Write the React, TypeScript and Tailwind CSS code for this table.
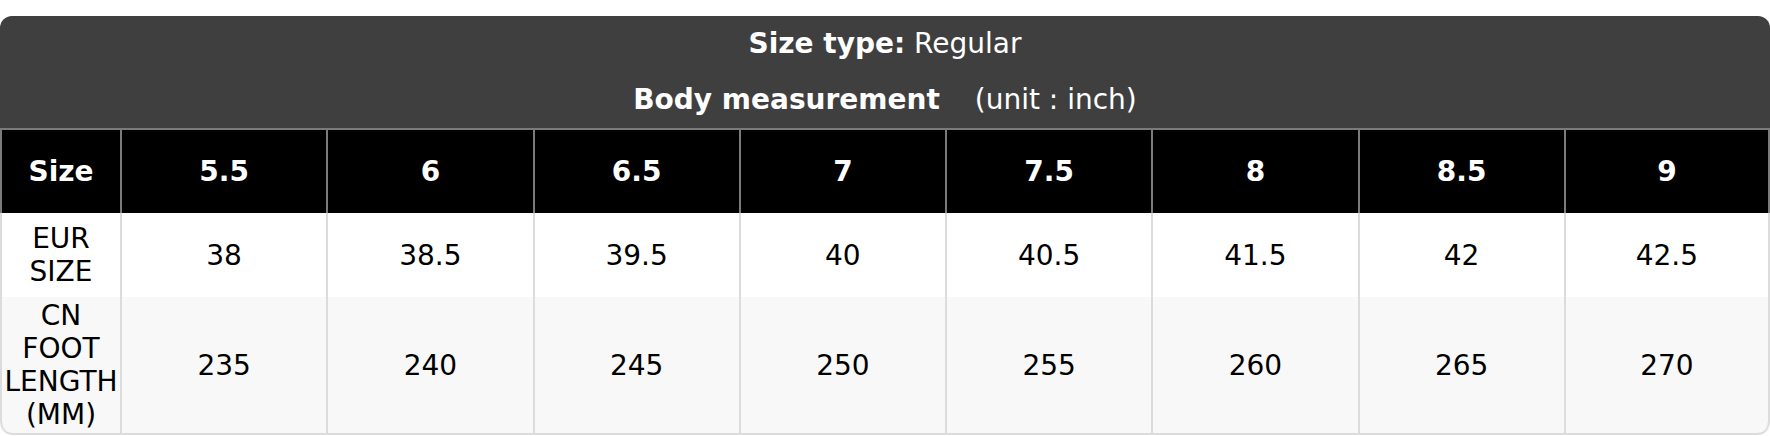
import React from "react";

const sizes = ["5.5", "6", "6.5", "7", "7.5", "8", "8.5", "9"];
const eur = ["38", "38.5", "39.5", "40", "40.5", "41.5", "42", "42.5"];
const cn = ["235", "240", "245", "250", "255", "260", "265", "270"];

export default function App() {
  return (
    <div className="w-[1770px] bg-white pt-[16px] font-['DejaVu_Sans',sans-serif] text-[28px] leading-[normal]">
      <div className="rounded-[12px] overflow-hidden">
        <div className="bg-[#3f3f3f] text-white text-center pt-[11px] pb-[12px] border-b-2 border-[#7b7b7b]">
          <p>
            <span className="font-bold">Size type:</span> Regular
          </p>
          <p className="mt-[23px]">
            <span className="font-bold">Body measurement</span>
            <span className="ml-[35px]">(unit : inch)</span>
          </p>
        </div>
        <div className="grid grid-cols-[120px_repeat(8,minmax(0,1fr))] bg-black text-white font-bold">
          <div className="h-[83px] flex items-center justify-center border-l-2 border-[#7b7b7b]">Size</div>
          {sizes.map((s, i) => (
            <div
              key={s}
              className={
                i === sizes.length - 1
                  ? "h-[83px] flex items-center justify-center border-l-2 border-r-2 border-[#7b7b7b]"
                  : "h-[83px] flex items-center justify-center border-l-2 border-[#7b7b7b]"
              }
            >
              {s}
            </div>
          ))}
        </div>
        <div className="grid grid-cols-[120px_repeat(8,minmax(0,1fr))] bg-white text-black">
          <div className="min-h-[84px] py-[2px] flex items-center justify-center text-center border-l-2 border-[#dcdcdc]">
            EUR SIZE
          </div>
          {eur.map((s, i) => (
            <div
              key={s}
              className={
                i === eur.length - 1
                  ? "min-h-[84px] py-[2px] flex items-center justify-center border-l-2 border-r-2 border-[#dcdcdc]"
                  : "min-h-[84px] py-[2px] flex items-center justify-center border-l-2 border-[#dcdcdc]"
              }
            >
              {s}
            </div>
          ))}
        </div>
        <div className="grid grid-cols-[120px_repeat(8,minmax(0,1fr))] bg-[#f8f8f8] text-black border-b-2 border-[#dcdcdc] rounded-b-[12px]">
          <div className="min-h-[84px] py-[2px] flex items-center justify-center text-center border-l-2 border-[#dcdcdc] rounded-bl-[12px]">
            CN FOOT LENGTH (MM)
          </div>
          {cn.map((s, i) => (
            <div
              key={s}
              className={
                i === cn.length - 1
                  ? "min-h-[84px] py-[2px] flex items-center justify-center border-l-2 border-r-2 border-[#dcdcdc] rounded-br-[12px]"
                  : "min-h-[84px] py-[2px] flex items-center justify-center border-l-2 border-[#dcdcdc]"
              }
            >
              {s}
            </div>
          ))}
        </div>
      </div>
    </div>
  );
}
